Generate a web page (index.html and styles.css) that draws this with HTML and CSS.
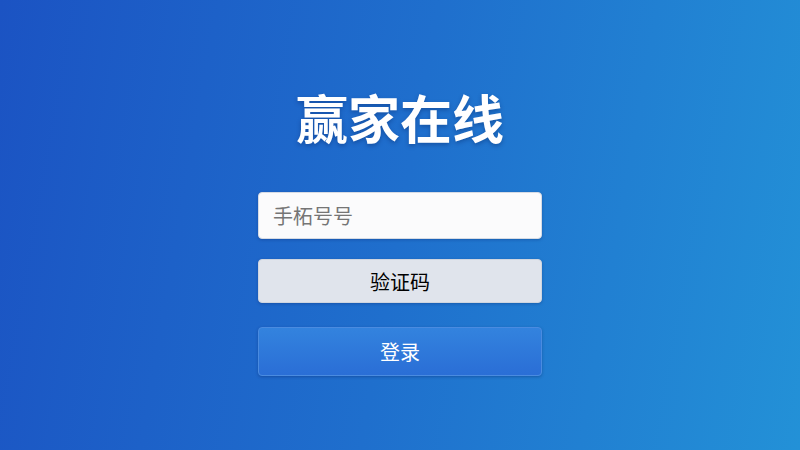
FILE: index.html
```html
<!DOCTYPE html>
<html lang="zh">
<head>
<meta charset="utf-8">
<title>赢家在线</title>
<link rel="stylesheet" href="styles.css">
</head>
<body>
<main class="page">
  <h1 class="title">赢家在线</h1>
  <form class="form">
    <input class="field" type="text" placeholder="手柘号号">
    <button class="btn btn-code" type="button">验证码</button>
    <button class="btn btn-login" type="button">登录</button>
  </form>
</main>
</body>
</html>
```
FILE: styles.css
```css
html, body {
  margin: 0;
  padding: 0;
  width: 800px;
  height: 450px;
  overflow: hidden;
}
body {
  font-family: "Noto Sans CJK SC", "Noto Sans", sans-serif;
  background: linear-gradient(100deg, #1b53c3 0%, #1f6fcd 50%, #2391d7 100%);
}
.page {
  height: 450px;
  display: flex;
  flex-direction: column;
  align-items: center;
}
.title {
  margin: 82px 0 0 0;
  height: 70px;
  line-height: 70px;
  font-size: 52px;
  font-weight: 700;
  color: #ffffff;
  letter-spacing: 0;
  text-shadow: 0 2px 4px rgba(0, 30, 90, 0.35);
}
.form {
  margin-top: 40px;
  width: 284px;
  display: flex;
  flex-direction: column;
}
.field {
  box-sizing: border-box;
  width: 284px;
  height: 47px;
  border: 1px solid #d6dbe4;
  border-radius: 4px;
  background: #fbfbfc;
  padding: 0 14px;
  font-family: inherit;
  font-size: 20px;
  color: #333;
  box-shadow: 0 1px 3px rgba(0, 20, 80, 0.25);
  outline: none;
}
.field::placeholder {
  color: #757575;
}
.btn {
  box-sizing: border-box;
  width: 284px;
  font-family: inherit;
  font-size: 20px;
  font-weight: 400;
  border-radius: 4px;
  cursor: pointer;
}
.btn-code {
  margin-top: 20px;
  height: 44px;
  background: #e0e4ec;
  border: 1px solid #cfd5df;
  color: #000;
  box-shadow: 0 1px 3px rgba(0, 20, 80, 0.25);
}
.btn-login {
  margin-top: 24px;
  height: 49px;
  background: linear-gradient(180deg, #3383de 0%, #2a6ed6 100%);
  border: 1px solid #4a8be0;
  color: #ffffff;
  box-shadow: 0 1px 3px rgba(0, 20, 80, 0.3);
}
```
